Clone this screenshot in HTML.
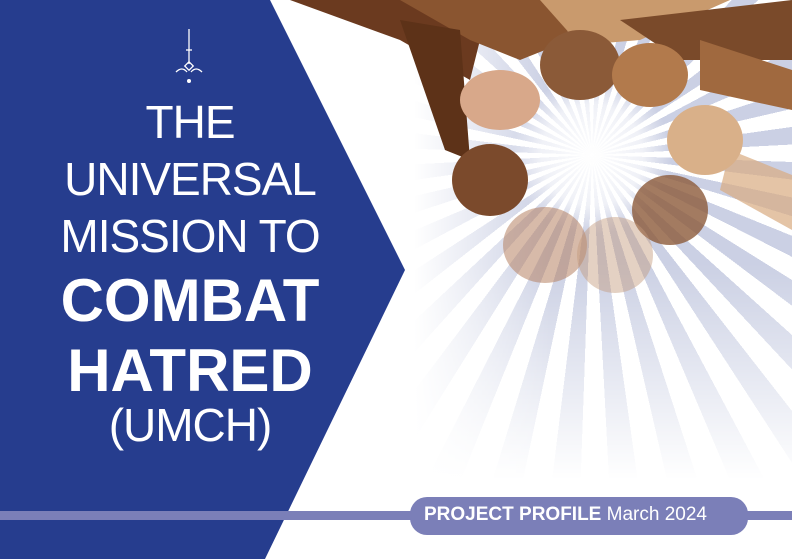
<!DOCTYPE html>
<html><head><style>
html,body{margin:0;padding:0}
body{width:792px;height:559px;position:relative;overflow:hidden;background:#fff;font-family:"Liberation Sans",sans-serif}
.rays{position:absolute;left:380px;top:0;width:412px;height:480px;
background:repeating-conic-gradient(from 2deg at 212px 155px,#c2c8df 0 5deg,transparent 5deg 10deg);
-webkit-mask-image:linear-gradient(to bottom,rgba(0,0,0,.85) 55%,rgba(0,0,0,0) 100%);
mask-image:linear-gradient(to bottom,rgba(0,0,0,.85) 55%,rgba(0,0,0,0) 100%);}
.fade{position:absolute;left:380px;top:0;width:170px;height:480px;background:linear-gradient(to right,#fff 20%,rgba(255,255,255,0))}
.cen{position:absolute;left:512px;top:75px;width:160px;height:160px;border-radius:50%;background:radial-gradient(circle,#fff 0,rgba(255,255,255,.7) 45%,rgba(255,255,255,0) 70%)}
.t{position:absolute;left:0;width:380px;text-align:center;color:#fff;white-space:nowrap}
</style></head><body>
<div class="rays"></div>
<div class="fade"></div>
<div class="cen"></div>
<svg style="position:absolute;left:0;top:0" width="792" height="559">
<!-- arms -->
<path d="M290 0 L420 0 L480 40 L470 80 L400 40 Z" fill="#6b3a1f"/>
<path d="M400 0 L560 0 L570 40 L520 60 L470 40 Z" fill="#8a5530"/>
<path d="M540 0 L730 0 L640 40 L580 45 Z" fill="#c99a6d"/>
<path d="M620 20 L792 0 L792 60 L680 60 Z" fill="#7a4a2a"/>
<path d="M700 40 L792 70 L792 110 L700 90 Z" fill="#a0693f"/>
<path d="M400 20 L460 30 L470 160 L445 150 Z" fill="#5d3218"/>
<path d="M730 150 L792 175 L792 230 L720 190 Z" fill="#d9ab80" opacity=".7"/>
<!-- fists -->
<ellipse cx="580" cy="65" rx="40" ry="35" fill="#8b5a38"/>
<ellipse cx="650" cy="75" rx="38" ry="32" fill="#b27a4c"/>
<ellipse cx="500" cy="100" rx="40" ry="30" fill="#d8a88a"/>
<ellipse cx="705" cy="140" rx="38" ry="35" fill="#d9b089"/>
<ellipse cx="490" cy="180" rx="38" ry="36" fill="#7b4a2c"/>
<ellipse cx="670" cy="210" rx="38" ry="35" fill="#8c5a3a" opacity=".8"/>
<ellipse cx="545" cy="245" rx="42" ry="38" fill="#b78263" opacity=".55"/>
<ellipse cx="615" cy="255" rx="38" ry="38" fill="#c4987a" opacity=".45"/>
<!-- blue chevron -->
<polygon points="0,0 270,0 405,270 265,559 0,559" fill="#263d8e"/>
<!-- bar -->
<rect x="0" y="511" width="792" height="9" fill="#7b7fb8"/>
<rect x="410" y="497" width="338" height="38" rx="17" fill="#7b7fb8"/>
<!-- ornament -->
<g stroke="#fff" fill="none" stroke-width="1.3">
<line x1="189" y1="29" x2="189" y2="64"/>
<line x1="186" y1="50" x2="192" y2="50"/>
<rect x="186" y="63" width="6" height="6" transform="rotate(45 189 66)"/>
<path d="M176 72 Q182 66 187 72"/><path d="M202 72 Q196 66 191 72"/>
</g>
<circle cx="189" cy="81" r="2" fill="#fff"/>
</svg>
<div class="t" style="top:95px;font-size:46px;letter-spacing:-1px">THE</div>
<div class="t" style="top:152px;font-size:46px;letter-spacing:-1px">UNIVERSAL</div>
<div class="t" style="top:209px;font-size:46px;letter-spacing:-1px">MISSION TO</div>
<div class="t" style="top:266px;font-size:60px;font-weight:bold">COMBAT</div>
<div class="t" style="top:336px;font-size:60px;font-weight:bold">HATRED</div>
<div class="t" style="top:398px;font-size:46px;letter-spacing:-1px">(UMCH)</div>
<div style="position:absolute;left:424px;top:504px;color:#fff;font-size:19px;white-space:nowrap"><b>PROJECT PROFILE</b> March 2024</div>
</body></html>
